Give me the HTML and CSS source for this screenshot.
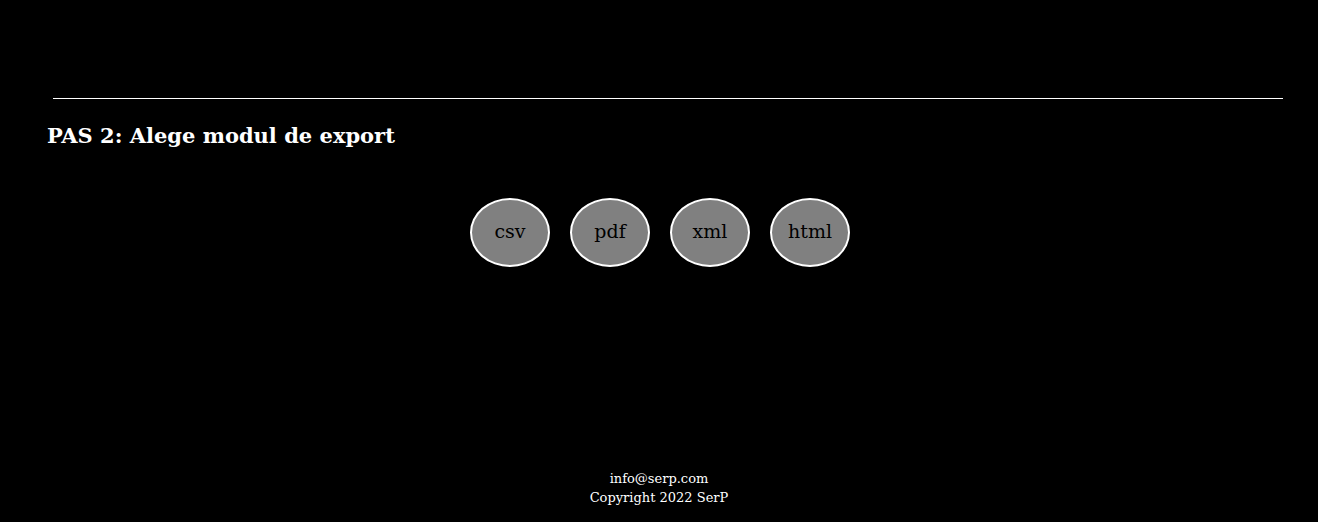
FILE: index.html
```html
<!DOCTYPE html>
<html>
<head>
<meta charset="utf-8">
<link rel="stylesheet" href="styles.css">
</head>
<body>
<div class="page">
  <div class="rule"></div>
  <h2 class="title">PAS 2: Alege modul de export</h2>
  <div class="options">
    <button class="opt">csv</button>
    <button class="opt">pdf</button>
    <button class="opt">xml</button>
    <button class="opt">html</button>
  </div>
  <footer class="foot">
    <div>info@serp.com</div>
    <div>Copyright 2022 SerP</div>
  </footer>
</div>
</body>
</html>
```
FILE: styles.css
```css
html, body {
  margin: 0;
  padding: 0;
  background: #000;
  color: #fff;
  font-family: "DejaVu Serif", "Liberation Serif", serif;
}
.page {
  height: 522px;
  display: flex;
  flex-direction: column;
}
.rule {
  margin: 98px 35px 0 53px;
  height: 1px;
  background: #fff;
}
.title {
  margin: 22px 0 0 47px;
  font-size: 21px;
  font-weight: bold;
  line-height: 30px;
}
.options {
  margin-top: 47px;
  padding-left: 2px;
  display: flex;
  justify-content: center;
  gap: 20px;
}
.opt {
  width: 80px;
  height: 69px;
  border: 2px solid #fff;
  border-radius: 50%;
  background: #808080;
  color: #000;
  font-family: "DejaVu Serif", "Liberation Serif", serif;
  font-size: 19px;
  padding: 0 0 3px 0;
}
.foot {
  margin-top: auto;
  margin-bottom: 15px;
  text-align: center;
  font-size: 13px;
  line-height: 19px;
}
```
